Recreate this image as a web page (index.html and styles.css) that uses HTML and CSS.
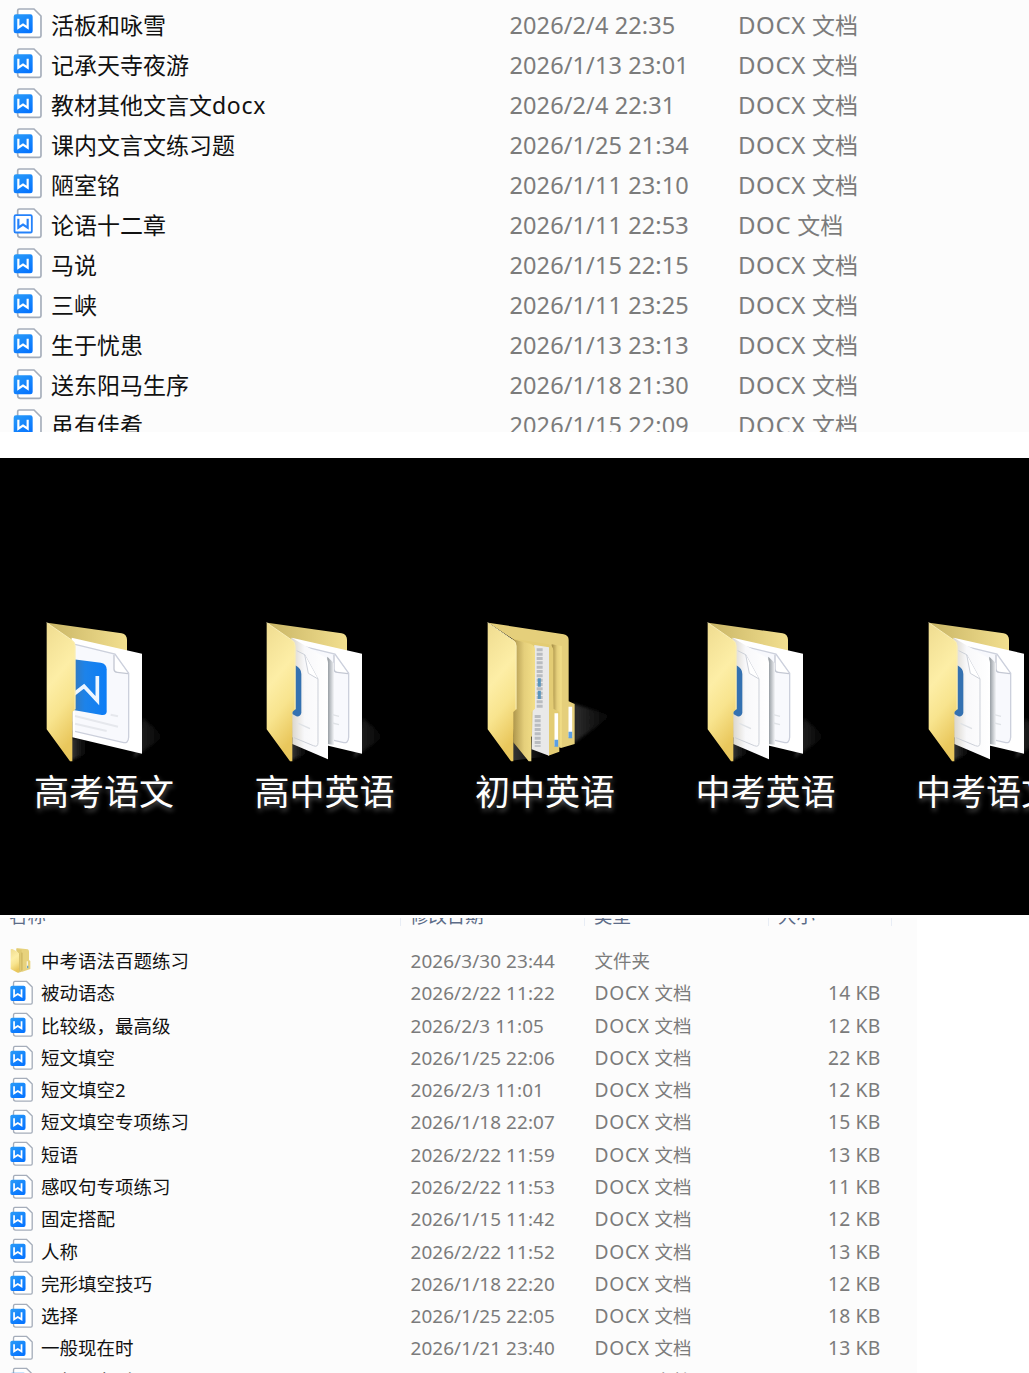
FILE: index.html
```html
<!DOCTYPE html>
<html lang="zh-CN">
<head>
<meta charset="utf-8">
<title>文档</title>
<link rel="stylesheet" href="styles.css">
</head>
<body>
<svg class="defs" width="0" height="0">
  <defs>
    <linearGradient id="blue" x1="0" y1="0" x2="0.6" y2="1"><stop offset="0" stop-color="#2a9cf8"/><stop offset="1" stop-color="#0876ff"/></linearGradient>
    <linearGradient id="front" x1="0" y1="0" x2="0.25" y2="1"><stop offset="0" stop-color="#efdc90"/><stop offset=".45" stop-color="#fdeea6"/><stop offset=".7" stop-color="#f8e48e"/><stop offset="1" stop-color="#e9c75c"/></linearGradient>
    <linearGradient id="back" x1="0" y1="0" x2="1" y2="0"><stop offset="0" stop-color="#c9b565"/><stop offset="1" stop-color="#f2df8f"/></linearGradient>
    <linearGradient id="leaf" x1="0" y1="0" x2="1" y2="0"><stop offset="0" stop-color="#a38b43"/><stop offset=".55" stop-color="#e5cf7b"/><stop offset="1" stop-color="#f3df88"/></linearGradient>
    <linearGradient id="paper" x1="0" y1="0" x2="1" y2="0"><stop offset="0" stop-color="#d9d5cc"/><stop offset=".35" stop-color="#f8f8fa"/><stop offset="1" stop-color="#ffffff"/></linearGradient>
    <linearGradient id="gap" x1="0" y1="0" x2="1" y2="0"><stop offset="0" stop-color="#8e959b"/><stop offset="1" stop-color="#f4f5f8"/></linearGradient>
    <linearGradient id="shade" x1="0" y1="0" x2="1" y2="0"><stop offset="0" stop-color="#383838"/><stop offset="1" stop-color="#000"/></linearGradient>
    <linearGradient id="badge" x1="0" y1="0" x2="1" y2="0"><stop offset="0" stop-color="#3579bb"/><stop offset=".35" stop-color="#1d83ea"/><stop offset="1" stop-color="#0d7df6"/></linearGradient>
    <filter id="soft" x="-10%" y="-10%" width="120%" height="120%"><feGaussianBlur stdDeviation="5"/></filter>
  </defs>
  <symbol id="docx" viewBox="0 0 96 100">
    <path d="M20 9H66L87 30V89Q87 94 82 94H25Q17 94 17 86V14Q17 9 23 9Z" fill="#fff" stroke="#a5adba" stroke-width="5"/>
    <rect x="5" y="25" width="57" height="57" rx="7" fill="url(#blue)"/>
    <path d="M19 38V65L33 56L47 65V38" fill="none" stroke="#fff" stroke-width="6.5"/>
  </symbol>
  <symbol id="doc" viewBox="0 0 96 100">
    <path d="M20 9H66L87 30V89Q87 94 82 94H25Q17 94 17 86V14Q17 9 23 9Z" fill="#fff" stroke="#a5adba" stroke-width="5"/>
    <rect x="7.500" y="27.500" width="52" height="52" rx="4" fill="#fff" stroke="#2482fb" stroke-width="5.5"/>
    <path d="M19 38V65L33 56L47 65V38" fill="none" stroke="#2482fb" stroke-width="6.5"/>
  </symbol>
  <symbol id="dir" viewBox="0 0 75 80">
    <path d="M22 3L56 7Q60 8 60 14V39L64 42V66L38 75Z" fill="#e7d27d"/>
    <path d="M29 14L40 17V70L30 75Z" fill="#b99f4f"/>
    <path d="M5 8Q5 5 10 6L26 14Q31 17 31 23V73Q30 79 26 77L5 66Z" fill="url(#front)"/>
    <path d="M22 6L38 8V74L28 77Q31 75 31 71V21Q30 16 22 11Z" fill="#dfc972"/>
    <path d="M55 43V64" stroke="#f8f4df" stroke-width="4"/><path d="M56 56V64" stroke="#6ca6c5" stroke-width="4"/>
  </symbol>
  <symbol id="folder-back" viewBox="0 0 600 500">
    <path d="M340 445L430 380L370 325Z" fill="url(#shade)" filter="url(#soft)" opacity=".75"/>
    <path d="M150 452L200 430V385H150Z" fill="url(#shade)" filter="url(#soft)"/>
    <path d="M82 38L305 70Q321 73 321 90V135H160Z" fill="url(#back)"/>
    <path d="M155 83L366 131V431L157 382Z" fill="#fff"/>
    <path d="M165 103L285 132L326 190V382Q325 402 308 397L165 364" fill="#f8f9fd" stroke="#ccd0dc" stroke-width="4"/>
    <path d="M282 134V178Q283 186 292 187L324 191" fill="#fff" stroke="#c4c8d3" stroke-width="4"/>
  </symbol>
  <symbol id="folder-front" viewBox="0 0 600 500">
    <path d="M80 38L158 92Q166 97 166 108V298L157 306V454H150L80 358Z" fill="url(#front)"/>
    <path d="M80 38L158 92Q165 97 165 108V298" fill="none" stroke="#f9eeb8" stroke-width="3"/>
  </symbol>
  <symbol id="folder-word" viewBox="0 0 600 500">
    <use href="#folder-back"/>
    <path d="M160 148L242 158Q260 161 260 178V304Q260 317 245 315L160 300Z" fill="url(#badge)"/>
    <path d="M162 252L192 229L232 272V198" fill="none" stroke="#eef6ff" stroke-width="11"/>
    <path d="M165 318L294 350M165 341L260 363M272 314L294 319" fill="none" stroke="#e6e8ed" stroke-width="6"/>
    <use href="#folder-front"/>
  </symbol>
  <symbol id="folder-papers" viewBox="0 0 600 500">
    <use href="#folder-back"/>
    <path d="M262 140L282 160V405L262 402Z" fill="url(#gap)"/>
    <path d="M155 83L255 142Q264 148 264 160V448L157 402Z" fill="url(#paper)"/>
    <path d="M170 122L194 134L234 207V398Q234 413 220 407L162 383" fill="none" stroke="#ccd0d8" stroke-width="3"/>
    <path d="M194 134L205 190L234 207" fill="#fff" stroke="#ccd0d8" stroke-width="3"/>
    <path d="M175 340L210 356M277 314L297 319M277 339L297 344" stroke="#dfe2e6" stroke-width="4"/>
    <path d="M166 166Q184 175 184 192V309Q181 321 169 319L157 312V298H166Z" fill="#3471b1"/>
    <use href="#folder-front"/>
  </symbol>
  <symbol id="folder-nested" viewBox="0 0 600 500">
    <path d="M335 280L450 317L338 400Z" fill="url(#shade)" opacity=".85" filter="url(#soft)"/>
    <path d="M150 452L250 440V380H150Z" fill="url(#shade)"/>
    <path d="M82 38L308 73Q323 76 323 90V274L341 282V402L300 414L160 360V90Z" fill="#e5cf7b"/>
    <path d="M272 103L302 108V412L280 400Z" fill="url(#leaf)"/>
    <path d="M160 86L262 103Q277 108 277 122V296L295 306V425L262 437Z" fill="#e3cc74"/>
    <path d="M220 105L264 112V437L212 418Z" fill="#e9e9e9"/>
    <path d="M236 115V295M230 315V410" stroke="#b9bcc0" stroke-width="18" stroke-dasharray="9 4"/>
    <path d="M235 205V275" stroke="#5995bb" stroke-width="9" stroke-dasharray="25 12"/>
    <path d="M150 86L207 101Q222 106 222 120V296L211 306V454H203L157 397Z" fill="url(#leaf)"/>
    <path d="M328 290V382M286 310V407" stroke="#fff" stroke-width="11"/>
    <path d="M328 365V385M286 389V410" stroke="#5b9fe5" stroke-width="11"/>
    <use href="#folder-front"/>
  </symbol>
</svg>

<main class="page">
  <section class="list list-top">
    <div class="row"><svg class="icon"><use href="#docx"/></svg><span class="name">活板和咏雪</span><span class="date">2026/2/4 22:35</span><span class="type"><b>DOCX</b> 文档</span></div>
    <div class="row"><svg class="icon"><use href="#docx"/></svg><span class="name">记承天寺夜游</span><span class="date">2026/1/13 23:01</span><span class="type"><b>DOCX</b> 文档</span></div>
    <div class="row"><svg class="icon"><use href="#docx"/></svg><span class="name">教材其他文言文<b>docx</b></span><span class="date">2026/2/4 22:31</span><span class="type"><b>DOCX</b> 文档</span></div>
    <div class="row"><svg class="icon"><use href="#docx"/></svg><span class="name">课内文言文练习题</span><span class="date">2026/1/25 21:34</span><span class="type"><b>DOCX</b> 文档</span></div>
    <div class="row"><svg class="icon"><use href="#docx"/></svg><span class="name">陋室铭</span><span class="date">2026/1/11 23:10</span><span class="type"><b>DOCX</b> 文档</span></div>
    <div class="row"><svg class="icon"><use href="#doc"/></svg><span class="name">论语十二章</span><span class="date">2026/1/11 22:53</span><span class="type"><b>DOC</b> 文档</span></div>
    <div class="row"><svg class="icon"><use href="#docx"/></svg><span class="name">马说</span><span class="date">2026/1/15 22:15</span><span class="type"><b>DOCX</b> 文档</span></div>
    <div class="row"><svg class="icon"><use href="#docx"/></svg><span class="name">三峡</span><span class="date">2026/1/11 23:25</span><span class="type"><b>DOCX</b> 文档</span></div>
    <div class="row"><svg class="icon"><use href="#docx"/></svg><span class="name">生于忧患</span><span class="date">2026/1/13 23:13</span><span class="type"><b>DOCX</b> 文档</span></div>
    <div class="row"><svg class="icon"><use href="#docx"/></svg><span class="name">送东阳马生序</span><span class="date">2026/1/18 21:30</span><span class="type"><b>DOCX</b> 文档</span></div>
    <div class="row"><svg class="icon"><use href="#docx"/></svg><span class="name">虽有佳肴</span><span class="date">2026/1/15 22:09</span><span class="type"><b>DOCX</b> 文档</span></div>
  </section>

  <section class="desktop">
    <div class="folder"><svg><use href="#folder-word"/></svg><span>高考语文</span></div>
    <div class="folder"><svg><use href="#folder-papers"/></svg><span>高中英语</span></div>
    <div class="folder"><svg><use href="#folder-nested"/></svg><span>初中英语</span></div>
    <div class="folder"><svg><use href="#folder-papers"/></svg><span>中考英语</span></div>
    <div class="folder"><svg><use href="#folder-papers"/></svg><span>中考语文</span></div>
  </section>

  <section class="list list-bottom">
    <header class="head"><span>名称</span><span>修改日期</span><span>类型</span><span>大小</span></header>
    <div class="row"><svg class="icon dir"><use href="#dir"/></svg><span class="name">中考语法百题练习</span><span class="date">2026/3/30 23:44</span><span class="type">文件夹</span><span class="size"></span></div>
    <div class="row"><svg class="icon"><use href="#docx"/></svg><span class="name">被动语态</span><span class="date">2026/2/22 11:22</span><span class="type"><b>DOCX</b> 文档</span><span class="size">14 KB</span></div>
    <div class="row"><svg class="icon"><use href="#docx"/></svg><span class="name">比较级，最高级</span><span class="date">2026/2/3 11:05</span><span class="type"><b>DOCX</b> 文档</span><span class="size">12 KB</span></div>
    <div class="row"><svg class="icon"><use href="#docx"/></svg><span class="name">短文填空</span><span class="date">2026/1/25 22:06</span><span class="type"><b>DOCX</b> 文档</span><span class="size">22 KB</span></div>
    <div class="row"><svg class="icon"><use href="#docx"/></svg><span class="name">短文填空2</span><span class="date">2026/2/3 11:01</span><span class="type"><b>DOCX</b> 文档</span><span class="size">12 KB</span></div>
    <div class="row"><svg class="icon"><use href="#docx"/></svg><span class="name">短文填空专项练习</span><span class="date">2026/1/18 22:07</span><span class="type"><b>DOCX</b> 文档</span><span class="size">15 KB</span></div>
    <div class="row"><svg class="icon"><use href="#docx"/></svg><span class="name">短语</span><span class="date">2026/2/22 11:59</span><span class="type"><b>DOCX</b> 文档</span><span class="size">13 KB</span></div>
    <div class="row"><svg class="icon"><use href="#docx"/></svg><span class="name">感叹句专项练习</span><span class="date">2026/2/22 11:53</span><span class="type"><b>DOCX</b> 文档</span><span class="size">11 KB</span></div>
    <div class="row"><svg class="icon"><use href="#docx"/></svg><span class="name">固定搭配</span><span class="date">2026/1/15 11:42</span><span class="type"><b>DOCX</b> 文档</span><span class="size">12 KB</span></div>
    <div class="row"><svg class="icon"><use href="#docx"/></svg><span class="name">人称</span><span class="date">2026/2/22 11:52</span><span class="type"><b>DOCX</b> 文档</span><span class="size">13 KB</span></div>
    <div class="row"><svg class="icon"><use href="#docx"/></svg><span class="name">完形填空技巧</span><span class="date">2026/1/18 22:20</span><span class="type"><b>DOCX</b> 文档</span><span class="size">12 KB</span></div>
    <div class="row"><svg class="icon"><use href="#docx"/></svg><span class="name">选择</span><span class="date">2026/1/25 22:05</span><span class="type"><b>DOCX</b> 文档</span><span class="size">18 KB</span></div>
    <div class="row"><svg class="icon"><use href="#docx"/></svg><span class="name">一般现在时</span><span class="date">2026/1/21 23:40</span><span class="type"><b>DOCX</b> 文档</span><span class="size">13 KB</span></div>
    <div class="row"><svg class="icon"><use href="#docx"/></svg><span class="name">一般现在时</span><span class="date"></span><span class="type"><b></b>文档</span><span class="size"></span></div>
  </section>
</main>
</body>
</html>
```

FILE: styles.css
```css
* { box-sizing: border-box; }
body {
  margin: 0;
  background: #fff;
  font-family: "Noto Sans", "Noto Sans CJK SC", sans-serif;
  color: #111;
}
.defs { display: block; position: absolute; }
.page {
  width: 1029px;
  height: 1373px;
  overflow: hidden;
  display: flex;
  flex-direction: column;
}
.list { background: #fcfcfc; overflow: hidden; flex: none; }
.row { display: grid; align-items: center; white-space: nowrap; }
.row b { font-weight: 400; }
.date, .type, .size { color: #7b7b7b; }

.list-top { height: 432px; padding-top: 5px; margin-bottom: 26px; }
.list-top .row {
  height: 40.03px;
  line-height: 40px;
  grid-template-columns: 39.5px 458.5px 228.5px 1fr;
  padding-left: 11.5px;
  font-size: 23px;
}
.list-top .icon { width: 32px; height: 33.3px; margin-top: -4px; }
.list-top .date { font-size: 23.5px; letter-spacing: 0.1px; }
.list-top .type b { font-size: 24px; letter-spacing: 0.6px; }
.list-top .name b { letter-spacing: 0.7px; }

.desktop {
  flex: none;
  height: 457px;
  background: #000;
  display: flex;
  padding: 152px 0 0 19.5px;
  overflow: hidden;
}
.folder { flex: 0 0 220.5px; display: flex; flex-direction: column; }
.folder svg { width: 200px; height: 166.67px; flex: none; filter: blur(0.5px); }
.folder span {
  padding-left: 14.5px;
  margin-top: -10px;
  font-size: 35px;
  line-height: 50px;
  color: #fff;
  white-space: nowrap;
  text-shadow: 1px 3px 5px #555;
}

.list-bottom { width: 917px; height: 458px; border-top: 3px solid #fff; }
.head {
  height: 27px;
  display: grid;
  grid-template-columns: 401px 184px 184px 123px;
  align-items: start;
  color: #5d6c88;
  font-size: 18.4px;
}
.head span {
  height: 8px;
  display: flex;
  align-items: flex-end;
  overflow: hidden;
  line-height: 20px;
  padding-left: 9px;
  border-right: 1px solid #e8edf5;
}
.list-bottom .row {
  height: 32.27px;
  line-height: 32px;
  grid-template-columns: 32px 369.5px 184px 150px 136px;
  padding-left: 9px;
  font-size: 18.5px;
}
.list-bottom .icon { width: 25.6px; height: 26.7px; margin-top: -2px; }
.list-bottom .icon.dir { width: 25px; height: 26.7px; }
.list-bottom .date { font-size: 18.9px; letter-spacing: 0.1px; }
.list-bottom .type b { font-size: 19.2px; letter-spacing: 0.7px; }
.list-bottom .type b:empty { display: inline-block; width: 60px; }
.list-bottom .size { font-size: 19.3px; letter-spacing: 0.2px; text-align: right; }
```
